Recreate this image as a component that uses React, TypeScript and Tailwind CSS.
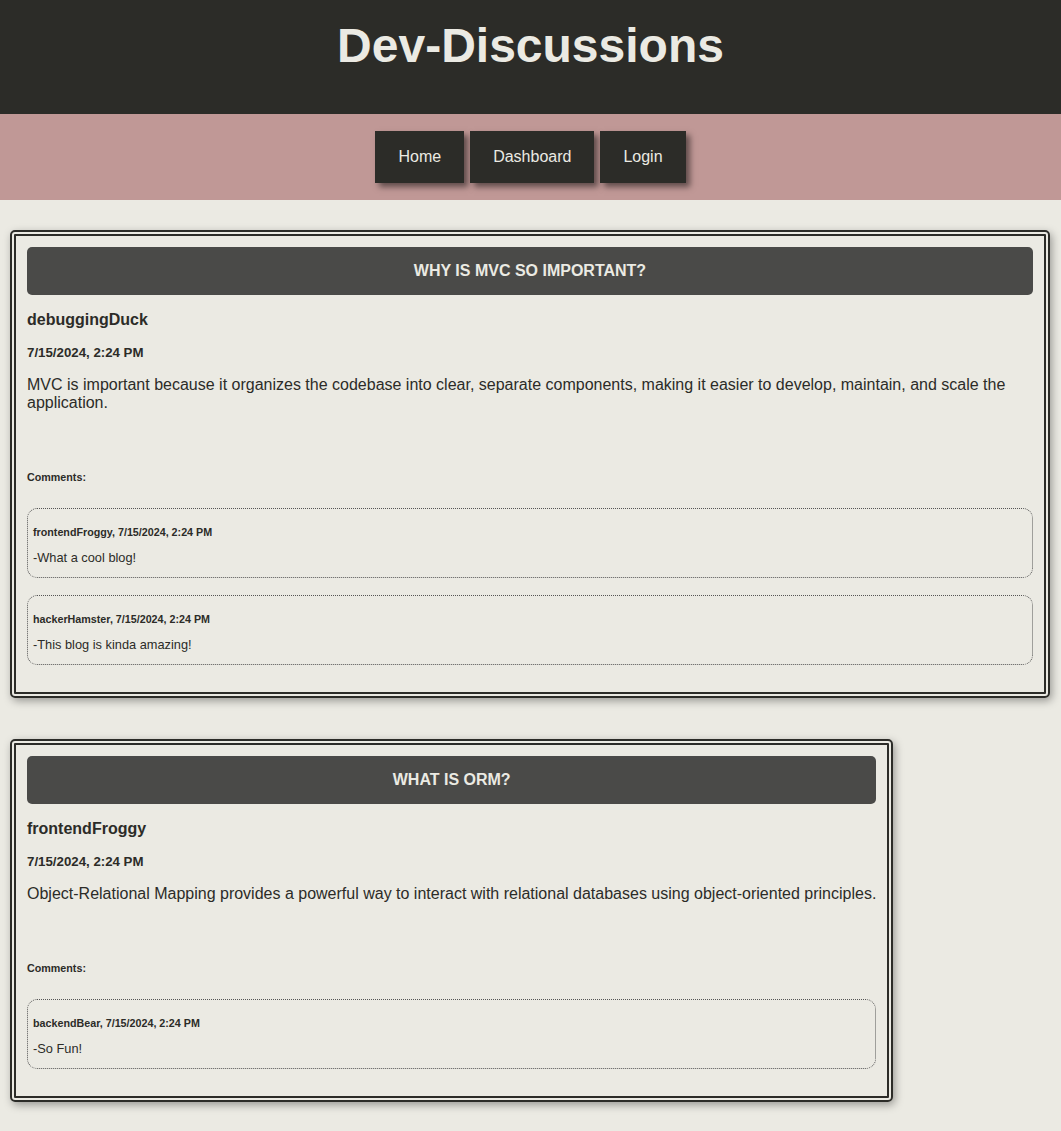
import React from 'react';

type Comment = { author: string; date: string; text: string };
type Post = { title: string; author: string; date: string; body: string; comments: Comment[] };

const posts: Post[] = [
    {
        title: 'Why is MVC so important?',
        author: 'debuggingDuck',
        date: '7/15/2024, 2:24 PM',
        body: 'MVC is important because it organizes the codebase into clear, separate components, making it easier to develop, maintain, and scale the application.',
        comments: [
            { author: 'frontendFroggy', date: '7/15/2024, 2:24 PM', text: '-What a cool blog!' },
            { author: 'hackerHamster', date: '7/15/2024, 2:24 PM', text: '-This blog is kinda amazing!' },
        ],
    },
    {
        title: 'What is ORM?',
        author: 'frontendFroggy',
        date: '7/15/2024, 2:24 PM',
        body: 'Object-Relational Mapping provides a powerful way to interact with relational databases using object-oriented principles.',
        comments: [{ author: 'backendBear', date: '7/15/2024, 2:24 PM', text: '-So Fun!' }],
    },
];

function PostCard({ post }: { post: Post }) {
    return (
        <article className="w-fit max-w-full rounded-[5px] border-[6px] border-double border-[#2c2c28] px-[11px] pt-[11px] pb-[27px] shadow-[2px_3px_8px_rgba(0,0,0,0.35)]">
            <h2 className="flex h-12 items-center justify-center rounded-[5px] bg-[#4a4a48] text-base font-bold uppercase text-[#ebeae3]">
                {post.title}
            </h2>
            <h3 className="mt-4 text-base font-bold leading-[18px]">{post.author}</h3>
            <p className="mt-4 text-[13.28px] font-bold leading-[15px]">{post.date}</p>
            <p className="mt-4 text-base leading-[18px]">{post.body}</p>
            <p className="mt-[59px] text-[10.72px] font-bold leading-[13px]">Comments:</p>
            <div className="mt-6 flex flex-col gap-[17px]">
                {post.comments.map((c) => (
                    <div
                        key={c.author}
                        className="h-[70px] rounded-[10px] border border-dotted border-[#555] px-[5px] pt-[17px]"
                    >
                        <p className="text-[10.72px] font-bold leading-[13px]">
                            {c.author}, {c.date}
                        </p>
                        <p className="mt-[11px] text-[12.8px] leading-[15px]">{c.text}</p>
                    </div>
                ))}
            </div>
        </article>
    );
}

export default function App() {
    return (
        <div className="min-h-[1131px] bg-[#ebeae3] font-['Liberation_Sans',Arial,sans-serif] text-[#2c2c28]">
            <header className="h-[114px] bg-[#2c2c28] pt-[18px] text-center">
                <h1 className="text-5xl font-bold leading-[55px] text-[#ebeae3]">Dev-Discussions</h1>
            </header>
            <nav className="flex justify-center gap-1.5 bg-[#c09896] py-[17px]">
                {['Home', 'Dashboard', 'Login'].map((item) => (
                    <a
                        key={item}
                        href="#"
                        className="flex h-[52px] items-center bg-[#2c2c28] px-[23px] text-base text-[#ebeae3] shadow-[4px_4px_6px_rgba(0,0,0,0.5)]"
                    >
                        {item}
                    </a>
                ))}
            </nav>
            <main className="flex flex-col gap-[41px] pt-[30px] pb-[27px] pl-[10px] pr-[11px]">
                {posts.map((p) => (
                    <PostCard key={p.title} post={p} />
                ))}
            </main>
        </div>
    );
}
